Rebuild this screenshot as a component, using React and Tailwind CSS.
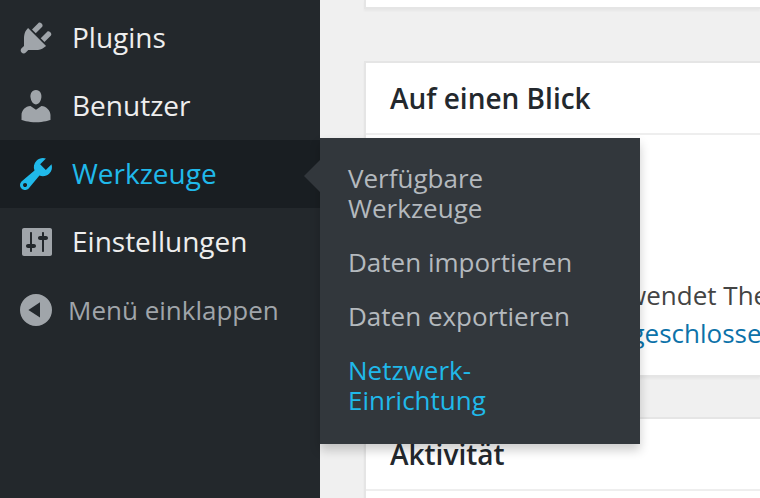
import React from 'react';
import clsx from 'clsx';

const PluginIcon = () => (
    <svg viewBox="0 0 20 20" className="size-10" fill="currentColor" aria-hidden="true">
        <path d="M13.11 4.36L9.87 7.6 8 5.73l3.24-3.24c.35-.34 1.05-.2 1.56.32.52.51.66 1.21.31 1.55zm-8 1.77l.91-1.12 9.01 9.01-1.19.84c-.71.71-2.63 1.16-3.82 1.16H6.14L4.9 17.26c-.59.59-1.54.59-2.12 0-.59-.58-.59-1.53 0-2.12L4 13.94v-3.88c0-1.13.4-3.19 1.09-3.89zm7.26 3.97l3.24-3.24c.34-.35 1.04-.21 1.55.31.52.51.66 1.21.31 1.55l-3.24 3.25z" />
    </svg>
);

const UserIcon = () => (
    <svg viewBox="0 0 20 20" className="size-10" fill="currentColor" aria-hidden="true">
        <path d="M10 9.25c-2.27 0-2.73-3.44-2.73-3.44C7 4.02 7.82 2 9.97 2c2.16 0 2.98 2.02 2.71 3.81 0 0-.41 3.44-2.68 3.44zm0 2.57L12.72 10c2.39 0 4.52 2.33 4.52 4.53v2.49s-3.65 1.13-7.24 1.13c-3.65 0-7.24-1.13-7.24-1.13v-2.49c0-2.25 1.94-4.48 4.47-4.48z" />
    </svg>
);

const ToolsIcon = () => (
    <svg viewBox="0 0 20 20" className="size-10" fill="currentColor" aria-hidden="true">
        <path d="M16.68 9.77c-1.34 1.34-3.3 1.67-4.95.99l-5.41 6.52c-.99.99-2.59.99-3.58 0s-.99-2.59 0-3.57l6.52-5.42c-.68-1.65-.35-3.61.99-4.95 1.28-1.28 3.12-1.62 4.72-1.06l-2.89 2.89 2.82 2.82 2.86-2.87c.53 1.58.18 3.39-1.08 4.65zM3.81 16.21c.4.39 1.04.39 1.43 0 .4-.4.4-1.04 0-1.43-.39-.4-1.03-.4-1.43 0-.39.39-.39 1.03 0 1.43z" />
    </svg>
);

const SettingsIcon = () => (
    <svg viewBox="0 0 20 20" className="size-10" fill="currentColor" aria-hidden="true">
        <path d="M18 16V4c0-.55-.45-1-1-1H4c-.55 0-1 .45-1 1v12c0 .55.45 1 1 1h13c.55 0 1-.45 1-1zM8 11h1c.55 0 1 .45 1 1s-.45 1-1 1H8v1.5c0 .28-.22.5-.5.5s-.5-.22-.5-.5V13H6c-.55 0-1-.45-1-1s.45-1 1-1h1V5.5c0-.28.22-.5.5-.5s.5.22.5.5V11zm5-2h-1c-.55 0-1-.45-1-1s.45-1 1-1h1V5.5c0-.28.22-.5.5-.5s.5.22.5.5V7h1c.55 0 1 .45 1 1s-.45 1-1 1h-1v5.5c0 .28-.22.5-.5.5s-.5-.22-.5-.5V9z" />
    </svg>
);

const CollapseIcon = () => (
    <svg viewBox="0 0 20 20" className="size-10" fill="currentColor" aria-hidden="true">
        <path fillRule="evenodd" d="M10 2a8 8 0 1 0 0 16 8 8 0 0 0 0-16zM12 6.1v7.7L6.2 9.95z" />
    </svg>
);

const menuItems = [
    { label: 'Plugins', icon: PluginIcon },
    { label: 'Benutzer', icon: UserIcon },
    {
        label: 'Werkzeuge',
        icon: ToolsIcon,
        open: true,
        children: [
            { label: 'Verfügbare Werkzeuge' },
            { label: 'Daten importieren' },
            { label: 'Daten exportieren' },
            { label: 'Netzwerk-Einrichtung', hovered: true }
        ]
    },
    { label: 'Einstellungen', icon: SettingsIcon }
];

const Submenu = ({ items }) => (
    <>
        <span className="absolute right-0 top-5 z-20 border-y-16 border-r-16 border-y-transparent border-r-[#32373c]" />
        <ul className="absolute left-full -top-0.5 z-10 w-80 bg-[#32373c] pt-[13px] pb-[17px] shadow-[0_6px_10px_rgba(0,0,0,0.2)]">
            {items.map((item) => (
                <li key={item.label}>
                    <a
                        href="#"
                        className={clsx(
                            'block px-7 py-3 text-[26px] leading-[30px] hover:text-[#20b9ea]',
                            item.hovered ? 'pr-28 text-[#20b9ea]' : 'text-[#b4b9be]'
                        )}
                    >
                        {item.label}
                    </a>
                </li>
            ))}
        </ul>
    </>
);

const MenuItem = ({ item }) => {
    const Icon = item.icon;
    return (
        <li className={clsx('relative', item.open && 'bg-[#191e22]')}>
            <a
                href="#"
                className={clsx(
                    'flex items-start gap-4 px-4 py-3.5 text-[28px] leading-[38px] hover:text-[#20b9ea]',
                    item.open ? 'text-[#20b9ea]' : 'text-[#eeeeee]'
                )}
            >
                <span className={item.open ? 'text-[#20b9ea]' : 'text-[#a0a5aa]'}>
                    <Icon />
                </span>
                {item.label}
            </a>
            {item.children && <Submenu items={item.children} />}
        </li>
    );
};

const Postbox = ({ title, className, children }) => (
    <section className={clsx('border-l-2 border-[#e5e5e5] bg-white shadow-[0_2px_2px_rgba(0,0,0,0.04)]', className)}>
        {title && (
            <h2 className="border-b-2 border-[#eeeeee] px-6 py-4 text-[28px] leading-[38px] font-semibold text-[#23282d]">
                {title}
            </h2>
        )}
        {children}
    </section>
);

export default function App() {
    return (
        <div className="flex min-h-screen overflow-hidden bg-[#f0f0f0] font-['Open_Sans',sans-serif]">
            <nav className="relative z-10 w-80 shrink-0 bg-[#23282c] pt-1">
                <ul>
                    {menuItems.map((item) => (
                        <MenuItem key={item.label} item={item} />
                    ))}
                </ul>
                <button
                    type="button"
                    className="flex w-full items-center gap-3 px-4 py-3.5 text-[26px] leading-10 text-[#a0a5aa]"
                >
                    <CollapseIcon />
                    Menü einklappen
                </button>
            </nav>

            <main className="flex min-w-0 flex-1 flex-col pl-11">
                <Postbox className="mb-13 h-[9px] border-b-2" />
                <Postbox title="Auf einen Blick" className="mb-10 border-y-2">
                    <div className="flex min-h-60 flex-col justify-end overflow-hidden px-6 pb-[23px] text-[26px] leading-[38px] whitespace-nowrap text-[#444444]">
                        <p>
                            <span className="pr-4">WordPress 4.0</span> verwendet Theme
                        </p>
                        <p>
                            <a href="#" className="text-[#0c72a9]">
                                Suchmaschinen ausgeschlossen
                            </a>
                        </p>
                    </div>
                </Postbox>
                <Postbox title="Aktivität" className="flex-1 border-t-2" />
            </main>
        </div>
    );
}
